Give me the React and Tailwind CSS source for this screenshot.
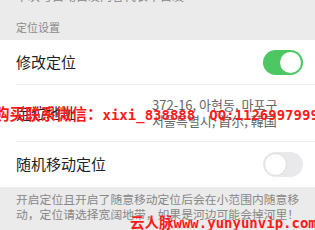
export default function App() {
  const font = { fontFamily: '"Noto Sans CJK SC", "Noto Sans", sans-serif' };
  const mono = { fontFamily: '"DejaVu Sans Mono", "Noto Sans CJK SC", monospace' };
  return (
    <div className="relative w-[315px] h-[230px] overflow-hidden bg-[#ebebeb]" style={font}>
      <div className="h-[40px] flex flex-col px-[16px]">
        <div className="text-[12px] leading-[14px] text-[#888] mt-[-11px] whitespace-nowrap">下次与自动自发内容代表不自发</div>
        <div className="mt-[17px] text-[11px] leading-[14px] text-[#8a8a8a]">定位设置</div>
      </div>
      <div className="bg-white">
        <div className="h-[44px] flex items-center justify-between pl-[16px] pr-[12px]">
          <span className="text-[15px] text-[#222]">修改定位</span>
          <div className="w-[40px] h-[25px] rounded-full bg-[#4cc764] relative">
            <div className="absolute right-[2px] top-[2px] w-[21px] h-[21px] rounded-full bg-white"></div>
          </div>
        </div>
        <div className="ml-[16px] h-[58px] flex items-center justify-between border-y border-[#ededed]">
          <span className="text-[15px] text-[#222]">定位地址</span>
          <div className="w-[163px] text-[13px] leading-[16px] text-[#666]">
            <div>372-16, 아현동, 마포구</div>
            <div>서울특별시, 首尔, 韓国</div>
          </div>
        </div>
        <div className="h-[45px] flex items-center justify-between pl-[16px] pr-[12px]">
          <span className="text-[15px] text-[#222]">随机移动定位</span>
          <div className="w-[40px] h-[25px] rounded-full bg-[#e9e9eb] relative">
            <div className="absolute left-[1px] top-[1px] w-[23px] h-[23px] rounded-full bg-white border border-[#ddd]"></div>
          </div>
        </div>
      </div>
      <div className="pl-[16px] pt-[4px] text-[11.8px] leading-[15px] text-[#888] whitespace-nowrap">
        开启定位且开启了随意移动定位后会在小范围内随意移<br />动，定位请选择宽阔地带，如果是河边可能会掉河里！
      </div>
      <div className="absolute left-[-6px] top-[103px] whitespace-nowrap font-bold text-[#ff1a1a] leading-[20px] flex items-baseline">
        <span className="text-[15.5px]">购买联系微信：</span>
        <span className="text-[14px]" style={mono}>xixi_838888</span>
        <span className="w-[14px]"></span>
        <span className="text-[14px]" style={mono}>QQ:1126997999</span>
      </div>
      <div className="absolute left-[130px] top-[213px] whitespace-nowrap font-bold text-[#ff1a1a] leading-[18px] flex items-baseline">
        <span className="text-[14.5px]">云人脉</span>
        <span className="text-[14px]" style={mono}>www.yunyunvip.com</span>
      </div>
    </div>
  );
}
